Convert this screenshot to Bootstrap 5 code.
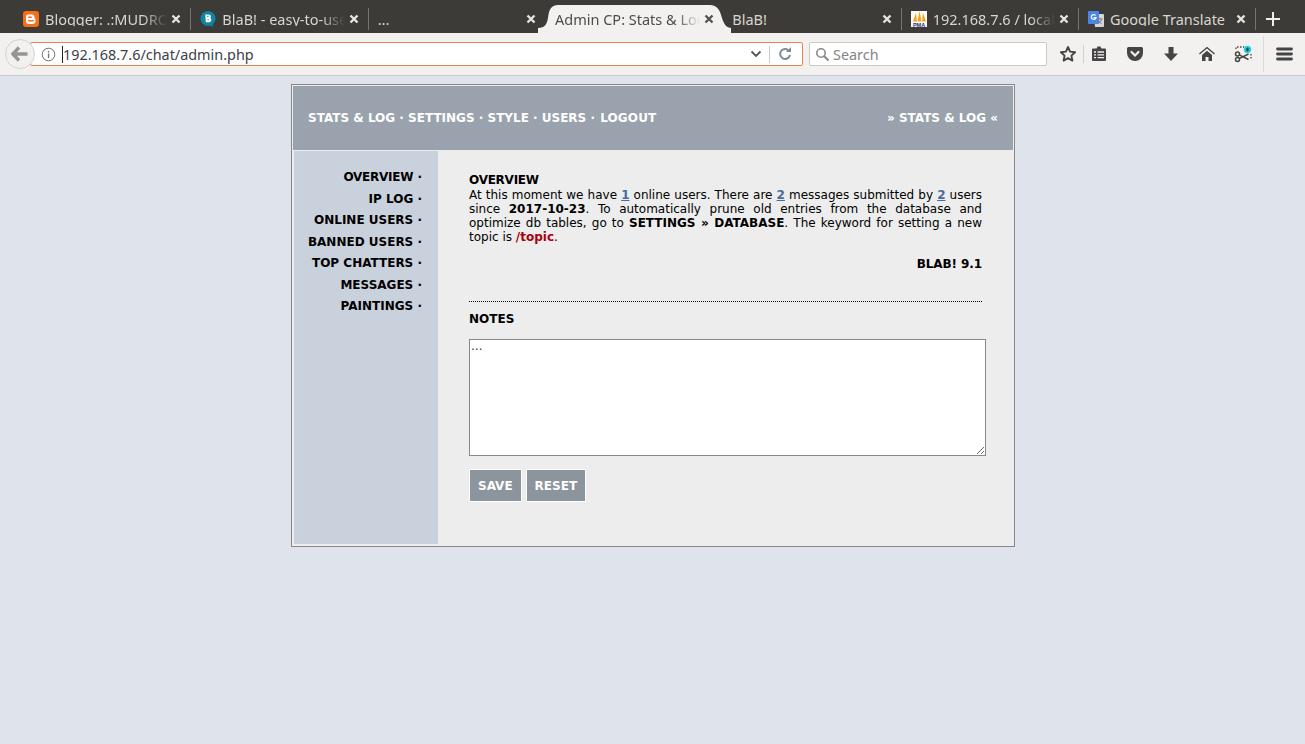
<!DOCTYPE html>
<html lang="en">
<head>
<meta charset="utf-8">
<title>Admin CP: Stats &amp; Log</title>
<link href="https://cdn.jsdelivr.net/npm/bootstrap@5.3.0/dist/css/bootstrap.min.css" rel="stylesheet">
<style>
html,body{height:100%;}
body{background:#dee3ec;font-family:"DejaVu Sans",sans-serif;font-size:12px;line-height:14px;color:#000;overflow:hidden;}
.tabstrip{height:33px;background:#3c3b37;padding-left:14px;font-family:"Noto Sans",sans-serif;font-size:14.5px;color:#d8d6d0;}
.tabx{width:176.33px;height:33px;padding:4px 7px 0 9px;flex:none;}
.tabx-active{width:193.33px;margin:0 -8px;padding:4px 15px 0 17px;background:#f2f1f0;color:#4c4c4c;position:relative;z-index:1;clip-path:path('M0 28 C7 28 9 24 10 18 C11 10 13 5 20 5 L172 5 C179 5 182 10 184 18 C186 24 188 28 194 28 L194 33 L0 33 Z');}
.tabx-after{padding-left:8px;}
.tabsep{width:1px;height:22px;margin-top:5px;flex:none;background:#77756f;}
.tabsep-off{background:transparent;}
.tabtxt{flex:1 1 0;min-width:0;overflow:hidden;white-space:nowrap;-webkit-mask-image:linear-gradient(to right,#000 calc(100% - 26px),transparent calc(100% - 2px));mask-image:linear-gradient(to right,#000 calc(100% - 26px),transparent calc(100% - 2px));}
.tabtxt-full{-webkit-mask-image:none;mask-image:none;}
.favi{width:16px;height:16px;flex:none;margin-right:6px;}
.closex{width:14px;height:14px;flex:none;}
.newtab{width:20px;height:20px;margin:4px 0 0 7px;flex:none;}
.toolbarx{height:43px;background:#f2f1f0;border-bottom:1px solid #c6cad0;padding-left:5px;font-family:"Noto Sans",sans-serif;}
.backbtn{width:30px;height:30px;border-radius:50%;background:#f2f1f0;border:1px solid #d3d3d1;flex:none;position:relative;z-index:1;}
.urlbar{width:773px;height:24px;margin-left:-5px;background:#fff;border:1px solid #e9834f;border-radius:2px;flex:none;padding-left:10px;font-size:14.4px;color:#3d4148;}
.infox{margin-right:6px;flex:none;}
.caretx{width:1px;height:17px;background:#222;flex:none;}
.inputtxt{padding-top:1px;}
.urlsep{width:1px;height:17px;background:#c9c9c9;flex:none;margin:0 8px 0 7px;}
.reloadx{margin-right:10px;flex:none;}
.searchbar{width:238px;height:24px;margin-left:6px;background:#fff;border:1px solid #c9c9c7;border-radius:2px;flex:none;padding-left:5px;font-size:14.4px;color:#858585;}
.searchico{margin-right:3px;flex:none;}
.toolsep{width:1px;height:18px;background:#d0d0ce;flex:none;}
.toolsep-tall{width:1px;height:36px;background:#dddcda;flex:none;margin:0 12px 0 2px;}
.toolslot{width:36px;height:24px;flex:none;}
.toolslot-star{width:30px;margin-left:6px;}
.toolslot-clip{width:30px;margin-right:3px;}
.pagebox{width:724px;margin:8px 0 0 291px;background:#ededed;border:1px solid #888;}
.headbar{margin:1px 1px 0;height:64px;padding:0 15px;background:#9aa2ad;color:#fff;font-weight:700;}
.hdlast{margin-left:1px;letter-spacing:.15px;}
.sidebarx{width:144px;margin:1px 0 2px 2px;height:393px;background:#c9d1dc;padding:16px 16px 0 0;font-weight:700;flex:none;}
.sidebarx li{line-height:21.5px;text-align:right;white-space:nowrap;}
.ovw{letter-spacing:-.25px;}
.mainx{width:513px;margin-left:31px;padding-top:23px;}
.headx{line-height:15px;}
.stat{color:#4a6a9e;font-weight:700;text-decoration:underline;}
.topicx{color:#a8000f;font-weight:700;}
.justx{text-align:justify;}
.verx{margin-top:13px;letter-spacing:-.1px;}
.dotline{border-top:1px dotted #000;margin-top:30px;}
.notesx{margin-top:10px;}
.notearea{display:block;width:517px;height:117px;margin-top:13px;border:1px solid #888;background:#fff;padding:0 1px;font:12px/13px "DejaVu Sans",sans-serif;color:#333;outline:0;}
.btnrow{margin-top:13px;}
.btnx{height:33px;background:#8c949e;border:1px solid #fff;color:#fff;font-weight:700;font-size:12px;padding:0 8px;font-family:"DejaVu Sans",sans-serif;}
</style>
</head>
<body>
<div class="tabstrip d-flex align-items-center">
  <div class="tabx d-flex align-items-center">
    <svg class="favi" viewBox="0 0 16 16"><rect width="16" height="16" rx="3" fill="#f86d17"/><path d="M5 3.500h4a2.500 2.500 0 0 1 2.500 2.500v0.800c0 .6.600.7 1 .9v2.300a3 3 0 0 1-3 3h-3.500a3 3 0 0 1-3-3V5.500a2 2 0 0 1 2-2z" fill="#fff"/><path d="M5.700 6.300h2.600M5.700 9.700h4.600" stroke="#f86d17" stroke-width="1.400" stroke-linecap="round"/></svg>
    <span class="tabtxt">Blogger: .:MUDROST:.</span>
    <svg class="closex" viewBox="0 0 14 14"><path d="M3.500 3.500l7 7M10.500 3.500l-7 7" stroke="#e6e5e1" stroke-width="2.400"/></svg>
  </div><i class="tabsep"></i>
  <div class="tabx d-flex align-items-center">
    <svg class="favi" viewBox="0 0 16 16"><circle cx="8" cy="7.500" r="7.500" fill="#0f84a8"/><path d="M8 13l5 3-.5-5z" fill="#0f84a8"/><path d="M5.200 3.500h3.800a2 2 0 0 1 1.200 3.500a2.300 2.300 0 0 1-1.200 4.300H5.800z" fill="#fff"/><path d="M7.200 5.500h1.300M7.500 8.700h1.300" stroke="#0f84a8" stroke-width="1.100"/></svg>
    <span class="tabtxt">BlaB! - easy-to-use PHP</span>
    <svg class="closex" viewBox="0 0 14 14"><path d="M3.500 3.500l7 7M10.500 3.500l-7 7" stroke="#e6e5e1" stroke-width="2.400"/></svg>
  </div><i class="tabsep"></i>
  <div class="tabx d-flex align-items-center">
    <span class="tabtxt tabtxt-full">...</span>
    <svg class="closex" viewBox="0 0 14 14"><path d="M3.500 3.500l7 7M10.500 3.500l-7 7" stroke="#e6e5e1" stroke-width="2.400"/></svg>
  </div><i class="tabsep tabsep-off"></i>
  <div class="tabx tabx-active d-flex align-items-center">
    <span class="tabtxt">Admin CP: Stats &amp; Log</span>
    <svg class="closex" viewBox="0 0 14 14"><path d="M3.500 3.500l7 7M10.500 3.500l-7 7" stroke="#55544f" stroke-width="2.400"/></svg>
  </div><i class="tabsep tabsep-off"></i>
  <div class="tabx tabx-after d-flex align-items-center">
    <span class="tabtxt tabtxt-full">BlaB!</span>
    <svg class="closex" viewBox="0 0 14 14"><path d="M3.500 3.500l7 7M10.500 3.500l-7 7" stroke="#e6e5e1" stroke-width="2.400"/></svg>
  </div><i class="tabsep"></i>
  <div class="tabx d-flex align-items-center">
    <svg class="favi" viewBox="0 0 16 16"><rect width="16" height="16" fill="#fbfaf4"/><path d="M2 10.500L5 2l1 8.500zM6.500 10.500L8.500 0l2 10.500zM11 10.500L12 2l3 8.500z" fill="#f2a31c"/><text x="8" y="15.500" text-anchor="middle" font-family="Liberation Sans,sans-serif" font-size="5.500" font-weight="700" fill="#1f2f7a">PMA</text></svg>
    <span class="tabtxt">192.168.7.6 / localhost</span>
    <svg class="closex" viewBox="0 0 14 14"><path d="M3.500 3.500l7 7M10.500 3.500l-7 7" stroke="#e6e5e1" stroke-width="2.400"/></svg>
  </div><i class="tabsep"></i>
  <div class="tabx d-flex align-items-center">
    <svg class="favi" viewBox="0 0 16 16"><path d="M6 3h9a1 1 0 0 1 1 1v11a1 1 0 0 1-1 1H7z" fill="#d6d6d6"/><rect width="11" height="13" rx="1" fill="#4a86e8"/><path d="M9.500 8h5M12 7v1M13.500 8.500c-.5 2-1.500 3-3 4M10.500 9c.5 1.500 1.500 3 3 3.500" stroke="#777" stroke-width="1" fill="none"/><path d="M7.600 4.500A2.400 2.400 0 1 0 8 6.700H5.600" stroke="#fff" stroke-width="1.200" fill="none"/></svg>
    <span class="tabtxt tabtxt-full">Google Translate</span>
    <svg class="closex" viewBox="0 0 14 14"><path d="M3.500 3.500l7 7M10.500 3.500l-7 7" stroke="#e6e5e1" stroke-width="2.400"/></svg>
  </div><i class="tabsep"></i>
  <svg class="newtab" viewBox="0 0 20 20"><path d="M10 3v14M3 10h14" stroke="#f0efeb" stroke-width="2"/></svg>
</div>
<div class="toolbarx d-flex align-items-center">
  <div class="backbtn d-flex align-items-center justify-content-center">
    <svg width="18" height="16" viewBox="0 0 18 16"><path d="M8 1.500L1.800 8 8 14.500M2.800 8H16.500" fill="none" stroke="#959595" stroke-width="3.400"/></svg>
  </div>
  <div class="urlbar d-flex align-items-center">
    <svg class="infox" width="15" height="15" viewBox="0 0 15 15"><circle cx="7.500" cy="7.500" r="6.300" fill="none" stroke="#707070"/><rect x="6.900" y="6.500" width="1.300" height="4.500" fill="#707070"/><rect x="6.900" y="4" width="1.300" height="1.500" fill="#707070"/></svg>
    <i class="caretx"></i>
    <span class="inputtxt flex-grow-1">192.168.7.6/chat/admin.php</span>
    <svg width="12" height="8" viewBox="0 0 12 8"><path d="M1.500 1.500L6 6l4.500-4.500" fill="none" stroke="#555" stroke-width="1.800"/></svg>
    <i class="urlsep"></i>
    <svg class="reloadx" width="14" height="14" viewBox="0 0 14 14"><path d="M11.500 4.500A5 5 0 1 0 12 8" fill="none" stroke="#7f8b97" stroke-width="2"/><path d="M8 5h5V0z" fill="#7f8b97"/></svg>
  </div>
  <div class="searchbar d-flex align-items-center">
    <svg class="searchico" width="15" height="15" viewBox="0 0 15 15"><circle cx="6" cy="6" r="4.200" fill="none" stroke="#8a8a8a" stroke-width="1.600"/><path d="M9 9l4.500 4.500" stroke="#8a8a8a" stroke-width="2.200"/></svg>
    <span class="inputtxt">Search</span>
  </div>
  <div class="toolslot toolslot-star d-flex align-items-center justify-content-center">
    <svg width="18" height="18" viewBox="0 0 18 18"><path d="M9 2l2.100 4.600 5 .6-3.700 3.400 1 5L9 13.100 4.600 15.600l1-5L1.900 7.200l5-.6z" fill="none" stroke="#454545" stroke-width="1.900" stroke-linejoin="round"/></svg>
  </div>
  <i class="toolsep"></i>
  <div class="toolslot toolslot-clip d-flex align-items-center justify-content-center">
    <svg width="16" height="16" viewBox="0 0 16 16"><path d="M1 3.500a1 1 0 0 1 1-1h12a1 1 0 0 1 1 1V14a1 1 0 0 1-1 1H2a1 1 0 0 1-1-1z" fill="#454545"/><path d="M5.500 3l1-2.500h3l1 2.500z" fill="#454545"/><path d="M3 6h2M6.500 6h6.500M3 8.800h2M6.500 8.800h6.500M3 11.600h2M6.500 11.600h6.500" stroke="#f2f1f0" stroke-width="1.300"/></svg>
  </div>
  <div class="toolslot d-flex align-items-center justify-content-center">
    <svg width="16" height="16" viewBox="0 0 16 16"><path d="M1.500 1h13A1.500 1.500 0 0 1 16 2.500V7A8 8 0 0 1 0 7V2.500A1.500 1.500 0 0 1 1.500 1z" fill="#454545"/><path d="M4.500 6L8 9.500 11.500 6" fill="none" stroke="#f2f1f0" stroke-width="2.200" stroke-linecap="round"/></svg>
  </div>
  <div class="toolslot d-flex align-items-center justify-content-center">
    <svg width="16" height="16" viewBox="0 0 16 16"><path d="M5.500 1h5v6.500H15l-7 7.500-7-7.500h4.500z" fill="#454545"/></svg>
  </div>
  <div class="toolslot d-flex align-items-center justify-content-center">
    <svg width="16" height="16" viewBox="0 0 16 16"><path d="M8 .8L0 7.500l.8 1L8 2.500l7.200 6 .8-1z" fill="#454545"/><path d="M3 9l5-4.200L13 9v6H9.500v-4h-3v4H3z" fill="#454545"/></svg>
  </div>
  <div class="toolslot d-flex align-items-center justify-content-center">
    <svg width="18" height="18" viewBox="0 0 18 18"><circle cx="3.500" cy="9" r="2" fill="none" stroke="#454545" stroke-width="1.500"/><circle cx="3.500" cy="14.500" r="2" fill="none" stroke="#454545" stroke-width="1.500"/><path d="M5.200 9.800L14.500 14.500M5.200 13.700L14.500 9" stroke="#454545" stroke-width="1.500"/><path d="M2 4V2h8M17 9v6" fill="none" stroke="#454545" stroke-width="1.300" stroke-dasharray="1.500 1.500"/><circle cx="13.500" cy="4.500" r="3.700" fill="#1fd3e6"/><path d="M13.500 2.500v4M11.800 3.500l3.400 2M15.200 3.500l-3.400 2" stroke="#1d3138" stroke-width=".9"/></svg>
  </div>
  <i class="toolsep-tall"></i>
  <svg width="17" height="14" viewBox="0 0 17 14"><path d="M1.500 2h14M1.500 7h14M1.500 12h14" stroke="#454545" stroke-width="2.800" stroke-linecap="round"/></svg>
</div>
<div class="pagebox">
  <div class="headbar d-flex align-items-center justify-content-between">
    <span>STATS &amp; LOG · SETTINGS · STYLE · USERS · <span class="hdlast">LOGOUT</span></span>
    <span>» STATS &amp; LOG «</span>
  </div>
  <div class="d-flex">
    <ul class="sidebarx list-unstyled">
      <li><span class="ovw">OVERVIEW</span> ·</li>
      <li>IP LOG ·</li>
      <li>ONLINE USERS ·</li>
      <li>BANNED USERS ·</li>
      <li>TOP CHATTERS ·</li>
      <li>MESSAGES ·</li>
      <li>PAINTINGS ·</li>
    </ul>
    <div class="mainx">
      <div class="headx fw-bold ovw">OVERVIEW</div>
      <div class="justx">At this moment we have <span class="stat">1</span> online users. There are <span class="stat">2</span> messages submitted by <span class="stat">2</span> users since <b>2017-10-23</b>. To automatically prune old entries from the database and optimize db tables, go to <b>SETTINGS » DATABASE</b>. The keyword for setting a new topic is <span class="topicx">/topic</span>.</div>
      <div class="verx fw-bold text-end">BLAB! 9.1</div>
      <div class="dotline"></div>
      <div class="notesx fw-bold">NOTES</div>
      <textarea class="notearea">...</textarea>
      <div class="btnrow d-flex gap-1">
        <button class="btnx" type="button">SAVE</button>
        <button class="btnx" type="button">RESET</button>
      </div>
    </div>
  </div>
</div>
<script src="https://cdn.jsdelivr.net/npm/bootstrap@5.3.0/dist/js/bootstrap.bundle.min.js"></script>
</body>
</html>
